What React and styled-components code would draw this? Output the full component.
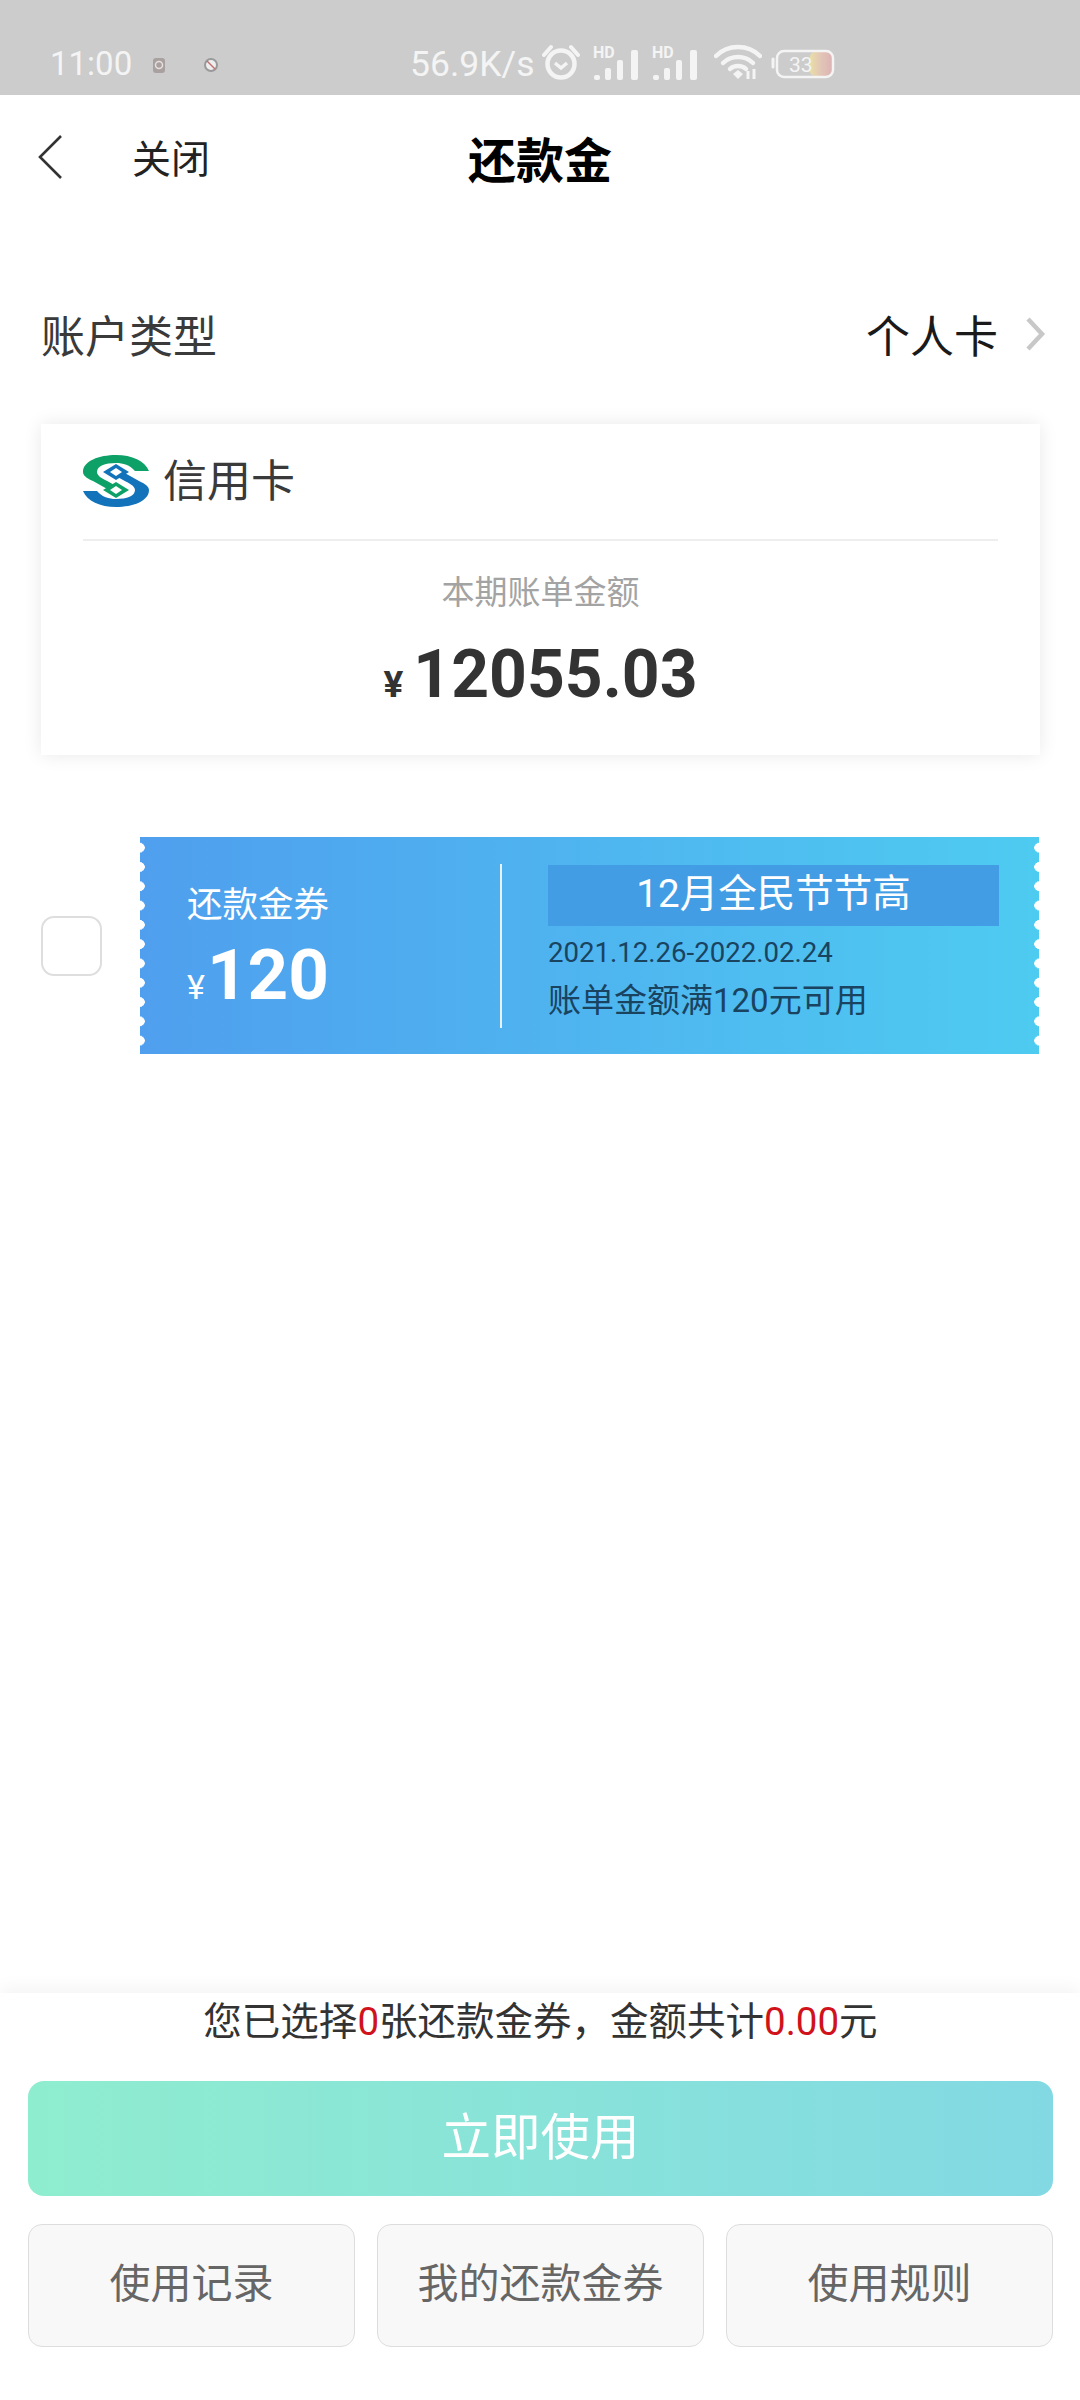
import React from "react";
import styled, { createGlobalStyle } from "styled-components";

const CJK = `"Noto Sans CJK SC", "Noto Sans", sans-serif`;
const NUM = `Roboto, "Noto Sans CJK SC", sans-serif`;

const Global = createGlobalStyle`
  html, body { margin: 0; padding: 0; background: #fff; }
  #root { width: 1080px; height: 2400px; }
  * { box-sizing: border-box; }
`;

const Page = styled.div`
  width: 1080px;
  height: 2400px;
  display: flex;
  flex-direction: column;
  font-family: ${NUM};
  overflow: hidden;
  background: #fff;
`;

const StatusBar = styled.div`
  height: 95px;
  flex: none;
  background: #cccccc;
  color: #f4f4f4;
  padding: 44px 0 0 50px;
  display: flex;
  align-items: flex-start;
`;
const Time = styled.span`
  font: 400 33px/40px ${NUM};
  width: 102px;
`;
const NoteIcon = styled.svg`
  width: 14px;
  height: 22px;
  margin: 11px 38px 0 0;
  flex: none;
`;
const Speed = styled.span`
  font: 400 35.5px/40px ${NUM};
  margin-left: 154px;
  width: 125px;
  white-space: nowrap;
`;
const StatusIcon = styled.svg`
  flex: none;
  display: block;
  margin-left: ${(p) => p.$gap}px;
  margin-top: ${(p) => p.$top || 0}px;
`;

const NavBar = styled.div`
  height: 128px;
  flex: none;
  position: relative;
  display: flex;
  align-items: center;
  padding: 0 0 4px 36px;
`;
const Back = styled.svg`
  width: 28px;
  height: 46px;
  flex: none;
  margin-right: 68px;
`;
const Close = styled.span`
  font: 400 39px/1 ${CJK};
  color: #222;
  margin-bottom: 2px;
`;
const NavTitle = styled.h1`
  position: absolute;
  left: 0;
  right: 0;
  margin: 0;
  text-align: center;
  font: 700 48px/1 ${CJK};
  color: #000;
`;

const TypeRow = styled.div`
  margin-top: 67px;
  height: 90px;
  padding: 0 0 3px 41px;
  display: flex;
  align-items: center;
  justify-content: space-between;
`;
const TypeLabel = styled.span`
  font: 400 44px/1 ${CJK};
  color: #3a3a3a;
`;
const TypeValue = styled.span`
  display: flex;
  align-items: center;
  font: 400 44px/1 ${CJK};
  color: #1a1a1a;
`;
const Chevron = styled.svg`
  width: 22px;
  height: 36px;
  margin: 0 34px 0 26px;
`;

const Card = styled.section`
  margin: 44px 40px 0 41px;
  height: 331px;
  background: #fff;
  padding: 0 42px;
  box-shadow: 0 0 18px rgba(0, 0, 0, 0.09);
`;
const CardHead = styled.div`
  height: 117px;
  display: flex;
  align-items: center;
  border-bottom: 2px solid #eeeeee;
  padding-bottom: 8px;
`;
const Logo = styled.svg`
  width: 66px;
  height: 52px;
  margin: 6px 14px 0 0;
`;
const CardName = styled.span`
  font: 400 44px/1 ${CJK};
  color: #3a3a3a;
`;
const BillLabel = styled.div`
  margin-top: 33px;
  text-align: center;
  font: 400 33px/1 ${CJK};
  color: #a3a3a3;
`;
const Amount = styled.div`
  margin-top: 35px;
  display: flex;
  align-items: baseline;
  justify-content: center;
  color: #333;
  font: 700 66px/1 ${NUM};
`;
const Yen = styled.span`
  font-size: ${(p) => p.$size}px;
  font-weight: ${(p) => p.$weight};
  margin-right: ${(p) => p.$gap}px;
`;

const CouponRow = styled.div`
  margin: 82px 41px 0 41px;
  display: flex;
  align-items: center;
`;
const Check = styled.div`
  width: 61px;
  height: 60px;
  border: 2px solid #dedede;
  border-radius: 13px;
  margin-right: 38px;
  flex: none;
`;
const Coupon = styled.div`
  position: relative;
  width: 899px;
  height: 217px;
  background: linear-gradient(90deg, #4f9fee 0%, #4ecbf1 100%);
  display: flex;
  color: #fff;
  &::before,
  &::after {
    content: "";
    position: absolute;
    top: 1px;
    bottom: 0;
    width: 5px;
    background-size: 5px 19.3px;
    background-repeat: repeat-y;
  }
  &::before {
    left: 0;
    background-image: radial-gradient(circle at 0 50%, #fff 4.5px, transparent 5px);
  }
  &::after {
    right: 0;
    background-image: radial-gradient(circle at 100% 50%, #fff 4.5px, transparent 5px);
  }
`;
const CouponLeft = styled.div`
  width: 360px;
  padding: 43px 0 0 47px;
  flex: none;
`;
const CouponKind = styled.div`
  font: 400 35.5px/44px ${CJK};
`;
const CouponValue = styled.div`
  margin-top: 15px;
  display: flex;
  align-items: baseline;
  font: 700 71px/1 ${NUM};
`;
const VLine = styled.div`
  width: 2px;
  height: 164px;
  margin-top: 27px;
  background: rgba(255, 255, 255, 0.85);
  flex: none;
`;
const CouponRight = styled.div`
  flex: 1;
  padding: 28px 40px 0 46px;
`;
const CouponTitle = styled.div`
  height: 61px;
  background: #439de5;
  text-align: center;
  font: 400 38.5px/58px ${NUM};
`;
const CouponDate = styled.div`
  margin-top: 9px;
  font: 400 27.6px/36px ${NUM};
  color: #19435f;
`;
const CouponRule = styled.div`
  margin-top: 8px;
  font: 400 33px/44px ${NUM};
  color: #19435f;
`;

const Spacer = styled.div`
  flex: 1;
`;

const Footer = styled.footer`
  height: 407px;
  flex: none;
  background: #fff;
  padding: 0 27px 0 28px;
  box-shadow: 0 -6px 16px rgba(0, 0, 0, 0.045);
  position: relative;
`;
const Summary = styled.div`
  height: 58px;
  text-align: center;
  font: 400 38.5px/58px ${NUM};
  color: #333;
  white-space: nowrap;
`;
const Red = styled.span`
  color: #d0121b;
`;
const Primary = styled.button`
  display: block;
  width: 100%;
  height: 115px;
  margin-top: 30px;
  border: 0;
  border-radius: 16px;
  background: linear-gradient(90deg, #8fedcf 0%, #82d9e3 100%);
  color: #fff;
  font: 400 49.5px/1 ${CJK};
  padding: 0 0 10px;
`;
const ButtonRow = styled.div`
  margin-top: 28px;
  display: grid;
  grid-template-columns: repeat(3, 327px);
  column-gap: 22px;
`;
const Secondary = styled.button`
  height: 123px;
  padding: 0 0 10px;
  background: #f8f8f8;
  border: 1px solid #dddddd;
  border-radius: 14px;
  font: 400 41px/1 ${CJK};
  color: #666;
`;

const SignalIcon = ({ gap }) => (
  <StatusIcon $gap={gap} width="50" height="36" viewBox="0 0 50 36">
    <text x="1" y="14" fontFamily="Roboto" fontWeight="700" fontSize="16" fill="#f4f4f4">HD</text>
    <g fill="#f4f4f4">
      <rect x="2" y="31" width="6" height="5" rx="2" />
      <rect x="13" y="24" width="6" height="12" rx="2" />
      <rect x="25" y="16" width="6" height="20" rx="2" />
      <rect x="39" y="6" width="7" height="30" rx="2" />
    </g>
  </StatusIcon>
);

const logoBand =
  "M66 16H52C47 10 40 8 33 8C22 8 14 11 14 17C14 21 20 24 26 27L33 31L26 35L10 26C3 23 0 20 0 17C0 6 16 0 33 0C49 0 62 6 66 16Z";

const App = () => (
  <Page>
    <Global />
    <StatusBar>
      <Time>11:00</Time>
      <NoteIcon viewBox="0 0 14 22">
        <rect x="1" y="3" width="12" height="15" rx="3" fill="#a9a0a0" />
        <circle cx="7" cy="10" r="3.5" fill="none" stroke="#e8e0e0" strokeWidth="1.5" />
      </NoteIcon>
      <NoteIcon viewBox="0 0 14 22">
        <circle cx="7" cy="10" r="6" fill="#eee" stroke="#999" strokeWidth="2" />
        <path d="M3 6l8 8" stroke="#c07070" strokeWidth="1.5" />
      </NoteIcon>
      <Speed>56.9K/s</Speed>
      <StatusIcon $gap={7} width="38" height="36" viewBox="0 0 38 36">
        <circle cx="19" cy="20" r="13.5" fill="none" stroke="#f4f4f4" strokeWidth="4.5" />
        <path d="M13 19l6 5 6-5" fill="none" stroke="#f4f4f4" strokeWidth="3.5" />
        <path d="M2 11L9 3M36 11L29 3" stroke="#f4f4f4" strokeWidth="4" strokeLinecap="round" />
      </StatusIcon>
      <SignalIcon gap={12} />
      <SignalIcon gap={9} />
      <StatusIcon $gap={13} width="48" height="36" viewBox="0 0 48 36">
        <g fill="none" stroke="#f4f4f4" strokeLinecap="round">
          <path d="M2 12C14 0 34 0 46 12" strokeWidth="4.5" />
          <path d="M9 19C17 11 31 11 39 19" strokeWidth="4.5" />
          <path d="M16 25C20 21 28 21 32 25" strokeWidth="4.5" />
        </g>
        <path d="M19 30l5-4 5 4-5 5z" fill="#f4f4f4" />
        <path d="M34 27v8M40 25v10" stroke="#f4f4f4" strokeWidth="3" />
      </StatusIcon>
      <StatusIcon $gap={9} $top={5} width="64" height="30" viewBox="0 0 64 30">
        <defs>
          <linearGradient id="bat" x1="0" x2="1" y1="0" y2="0">
            <stop offset="0" stopColor="#e9dfa8" />
            <stop offset="0.45" stopColor="#e3c7b5" />
            <stop offset="1" stopColor="#dcb3b5" />
          </linearGradient>
        </defs>
        <path d="M2 10v8" stroke="#f4f4f4" strokeWidth="3" strokeLinecap="round" />
        <rect x="39" y="3" width="22" height="24" rx="5" fill="url(#bat)" />
        <rect x="6" y="2" width="56" height="26" rx="7" fill="none" stroke="#f4f4f4" strokeWidth="2.5" />
        <text x="18" y="23" fontFamily="Roboto" fontSize="21" fill="#f4f4f4">33</text>
      </StatusIcon>
    </StatusBar>

    <NavBar>
      <Back viewBox="0 0 28 46">
        <path d="M25 2L4 23l21 21" fill="none" stroke="#333" strokeWidth="2.6" />
      </Back>
      <Close>关闭</Close>
      <NavTitle>还款金</NavTitle>
    </NavBar>

    <TypeRow>
      <TypeLabel>账户类型</TypeLabel>
      <TypeValue>
        个人卡
        <Chevron viewBox="0 0 22 36">
          <path d="M4 3l14 15L4 33" fill="none" stroke="#c8c8c8" strokeWidth="4.5" />
        </Chevron>
      </TypeValue>
    </TypeRow>

    <Card>
      <CardHead>
        <Logo viewBox="0 0 66 52">
          <path d={logoBand} fill="#0da168" />
          <path d={logoBand} fill="#1273bb" transform="rotate(180 33 26)" />
          <path d="M33 9L46 17L33 25L20 17Z" fill="#1273bb" />
          <path d="M33 13L39 17L33 21L27 17Z" fill="#fff" />
          <path d="M33 27L46 35L33 43L20 35Z" fill="#0da168" />
          <path d="M33 31L39 35L33 39L27 35Z" fill="#fff" />
        </Logo>
        <CardName>信用卡</CardName>
      </CardHead>
      <BillLabel>本期账单金额</BillLabel>
      <Amount>
        <Yen $size={37} $weight={700} $gap={10}>¥</Yen>
        12055.03
      </Amount>
    </Card>

    <CouponRow>
      <Check />
      <Coupon>
        <CouponLeft>
          <CouponKind>还款金券</CouponKind>
          <CouponValue>
            <Yen $size={34} $weight={400} $gap={2}>¥</Yen>
            120
          </CouponValue>
        </CouponLeft>
        <VLine />
        <CouponRight>
          <CouponTitle>12月全民节节高</CouponTitle>
          <CouponDate>2021.12.26-2022.02.24</CouponDate>
          <CouponRule>账单金额满120元可用</CouponRule>
        </CouponRight>
      </Coupon>
    </CouponRow>

    <Spacer />

    <Footer>
      <Summary>
        您已选择<Red>0</Red>张还款金券，金额共计<Red>0.00</Red>元
      </Summary>
      <Primary>立即使用</Primary>
      <ButtonRow>
        <Secondary>使用记录</Secondary>
        <Secondary>我的还款金券</Secondary>
        <Secondary>使用规则</Secondary>
      </ButtonRow>
    </Footer>
  </Page>
);

export default App;
